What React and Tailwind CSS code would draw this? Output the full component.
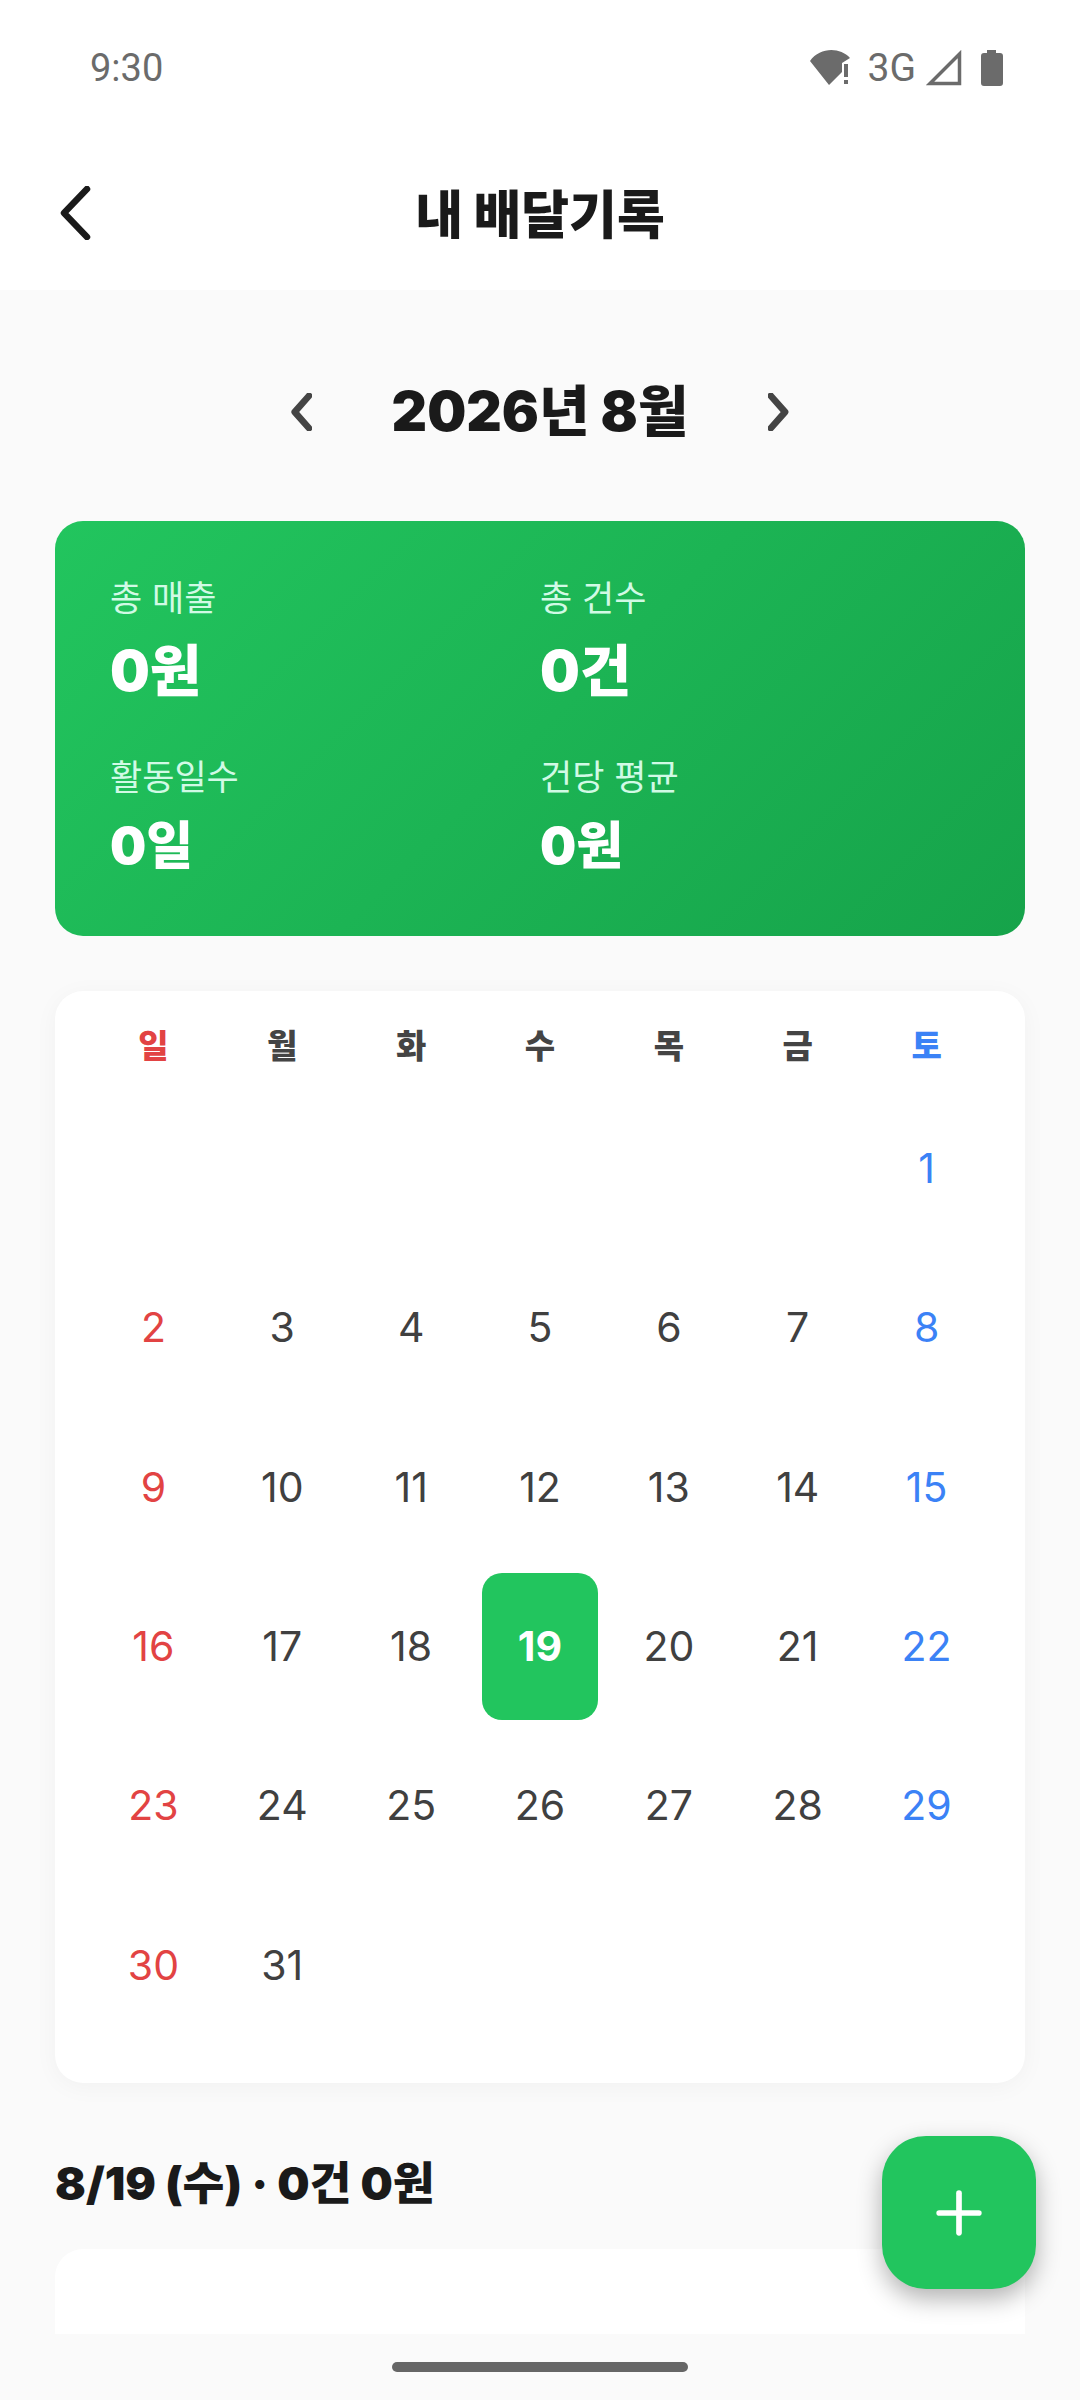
import React from "react";
import { Plus } from "lucide-react";

const KR = "font-['Inter','Noto_Sans_CJK_KR',sans-serif]";

const weekDays = [
  { label: "일", color: "text-[#e24343]" },
  { label: "월", color: "text-[#444444]" },
  { label: "화", color: "text-[#444444]" },
  { label: "수", color: "text-[#444444]" },
  { label: "목", color: "text-[#444444]" },
  { label: "금", color: "text-[#444444]" },
  { label: "토", color: "text-[#3b82f6]" },
];

const stats = [
  { label: "총 매출", value: "0원", size: "text-[56px] h-[98px]", mb: "mb-[33px]" },
  { label: "총 건수", value: "0건", size: "text-[56px] h-[98px]", mb: "mb-[33px]" },
  { label: "활동일수", value: "0일", size: "text-[51px] h-[90px]", mb: "" },
  { label: "건당 평균", value: "0원", size: "text-[51px] h-[90px]", mb: "" },
];

// august 2026 starts on saturday
const days = [...Array(6).fill(null), ...Array.from({ length: 31 }, (_, i) => i + 1)];

function StatusBar() {
  return (
    <div className="h-[136px] flex items-center justify-between pl-[90px] pr-[77px] bg-white font-['Roboto',sans-serif] text-[#6b6b6b]">
      <span className="text-[38px] leading-none">9:30</span>
      <div className="flex items-center">
        <svg width="42" height="36" viewBox="0 0 42 36" className="mr-[16px]" fill="#6b6b6b">
          <path d="M0 11 C10 -3 30 -3 40 8 L32 13 L32 22 L19 35 Z" />
          <rect x="34" y="14" width="4" height="13" />
          <rect x="34" y="30" width="4" height="4" />
        </svg>
        <span className="text-[39px] leading-none mr-[10px]">3G</span>
        <svg width="36" height="36" viewBox="0 0 36 36" className="mr-[19px]" fill="none" stroke="#6b6b6b" strokeWidth="3.5">
          <path d="M4 33.5 L33.5 4 L33.5 33.5 Z" />
        </svg>
        <svg width="22" height="36" viewBox="0 0 22 36" fill="#6b6b6b">
          <path d="M6 0 H15 V3 H19 Q22 3 22 6 V33 Q22 36 19 36 H3 Q0 36 0 33 V6 Q0 3 3 3 H6 Z" />
        </svg>
      </div>
    </div>
  );
}

function Chevron({ dir, size, stroke, color }) {
  return (
    <svg width={size * 0.6} height={size} viewBox="0 0 24 40" fill="none" stroke={color} strokeWidth={stroke} strokeLinecap="round" strokeLinejoin="round">
      {dir === "left" ? <path d="M21 3 L6 20 L21 37" /> : <path d="M3 3 L18 20 L3 37" />}
    </svg>
  );
}

function App() {
  return (
    <div className={`w-[1080px] h-[2400px] relative flex flex-col overflow-hidden bg-[#fafafa] ${KR}`}>
      <StatusBar />

      {/* Header */}
      <div className="h-[154px] bg-white flex items-center relative">
        <div className="pl-[58px]">
          <svg width="34" height="54" viewBox="0 0 34 54" fill="none" stroke="#1a1a1a" strokeWidth="6.5" strokeLinecap="round" strokeLinejoin="round">
            <path d="M29 3 L6 27 L29 51" />
          </svg>
        </div>
        <div className="absolute inset-0 flex items-center justify-center pt-[6px] text-[52px] font-black text-[#1a1a1a]">
          내 배달기록
        </div>
      </div>

      {/* Scroll area */}
      <div className="h-[2044px] flex-none overflow-hidden px-[55px]">
        {/* Month selector */}
        <div className="h-[231px] flex items-center justify-center pt-[12px]">
          <Chevron dir="left" size={38} stroke={7} color="#444444" />
          <span className="text-[55px] font-black text-[#1a1a1a] mx-[80px] leading-none">2026년 8월</span>
          <Chevron dir="right" size={38} stroke={7} color="#444444" />
        </div>

        {/* Summary card */}
        <div className="h-[415px] rounded-[28px] bg-[linear-gradient(135deg,#22c55e,#16a34a)] pt-[53px] px-[55px] grid grid-cols-2 content-start">
          {stats.map((s) => (
            <div key={s.label} className={s.mb}>
              <div className="text-[35px] leading-[48px] text-[#d1fae5]">{s.label}</div>
              <div className={`${s.size} font-black text-white flex items-center`}>{s.value}</div>
            </div>
          ))}
        </div>

        {/* Calendar */}
        <div className="mt-[55px] h-[1092px] bg-white rounded-[28px] shadow-[0_4px_24px_rgba(0,0,0,0.04)] pt-[32px] px-[40px]">
          <div className="grid grid-cols-7 gap-x-[12px] h-[46px] items-center">
            {weekDays.map((d) => (
              <div key={d.label} className={`text-center text-[33px] font-black leading-none ${d.color}`}>
                {d.label}
              </div>
            ))}
          </div>
          <div className="grid grid-cols-7 gap-x-[12px] gap-y-[12.4px] mt-[26px]">
            {days.map((d, i) => {
              const col = i % 7;
              let cls = "text-[#404040]";
              if (col === 0) cls = "text-[#e24343]";
              if (col === 6) cls = "text-[#3b82f6]";
              if (d === 19) cls = "bg-[#22c55e] text-white font-bold rounded-[20px]";
              return (
                <div key={i} className={`h-[147px] flex items-center justify-center text-[41px] ${cls}`}>
                  {d}
                </div>
              );
            })}
          </div>
        </div>

        {/* Selected day */}
        <div className="mt-[72px] text-[45.5px] font-black text-[#1a1a1a] leading-[58px]">8/19 (수) · 0건 0원</div>
        <div className="mt-[36px] h-[200px] bg-white rounded-[28px]"></div>
      </div>

      {/* Home indicator */}
      <div className="h-[66px] flex-none bg-[#fafafa] pt-[28px]">
        <div className="w-[296px] h-[10px] mx-auto rounded-full bg-[#666666]"></div>
      </div>

      {/* FAB */}
      <div className="absolute left-[882px] top-[2136px] w-[154px] h-[153px] rounded-[44px] bg-[#22c55e] flex items-center justify-center shadow-[0_10px_24px_rgba(0,0,0,0.3)]">
        <Plus size={68} color="white" strokeWidth={2} />
      </div>
    </div>
  );
}

export default App;
